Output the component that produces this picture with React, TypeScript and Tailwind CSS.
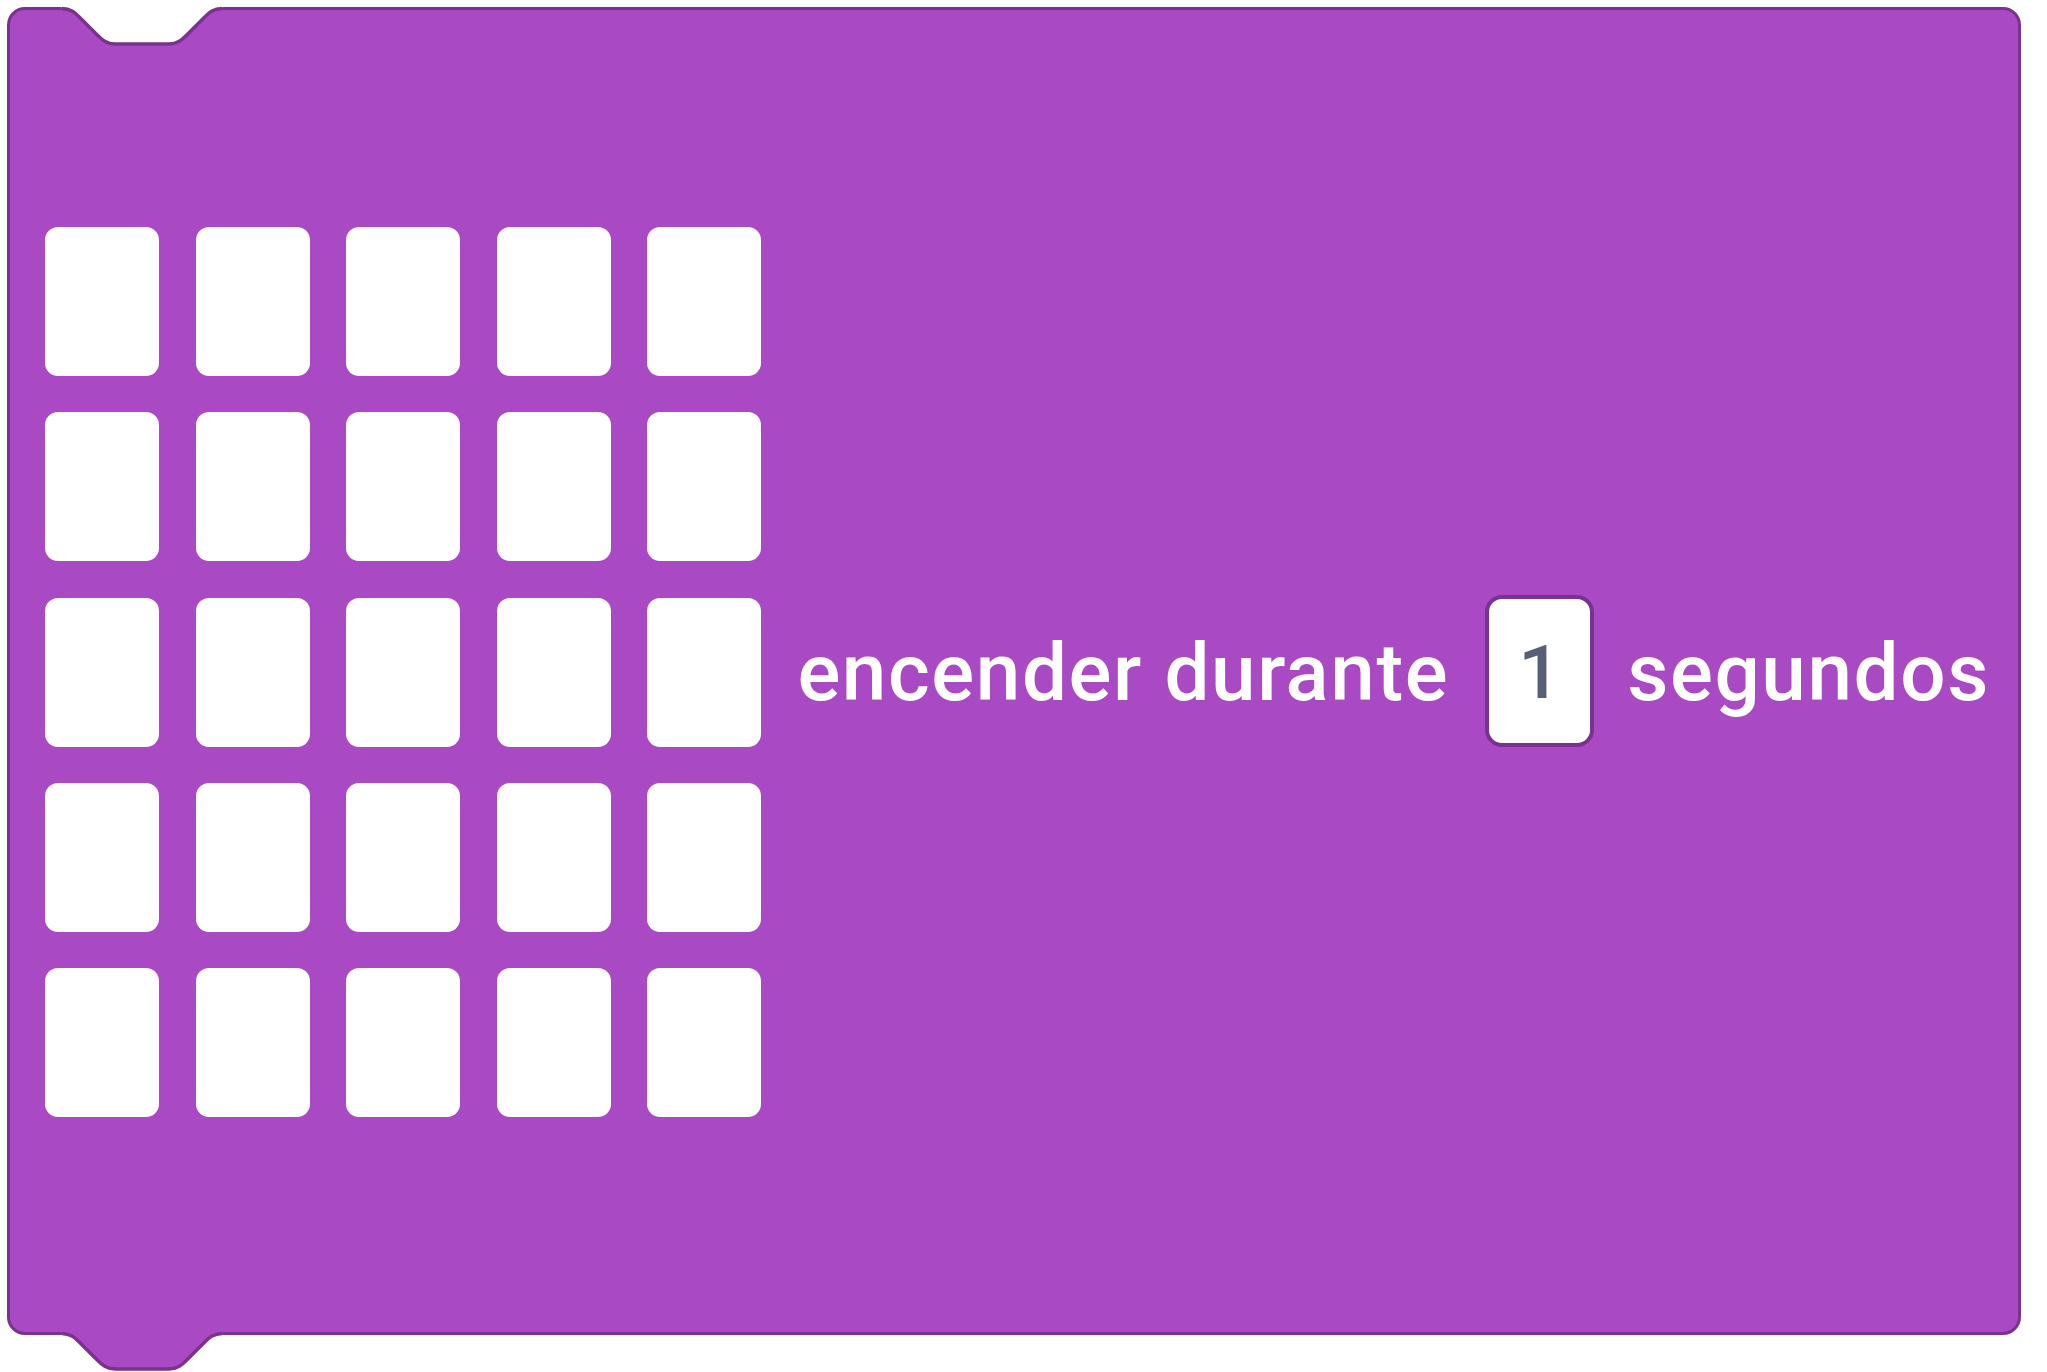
import React from "react";

const FILL = "#a94ac4";
const STROKE = "#7a3290";

const NOTCH =
  "c2,0 3,1 4,2 l4,4 c1,1 2,2 4,2 h12 c2,0 3,-1 4,-2 l4,-4 c1,-1 2,-2 4,-2";

function TopNotch() {
  return (
    <svg
      className="absolute left-[-3px] top-[-3px] overflow-visible"
      width={240}
      height={50}
      aria-hidden
    >
      <g transform="translate(1.5,1.5) scale(4.45)">
        <path d={`M 11.8,-1 L 12,0 ${NOTCH} L 48.2,-1 Z`} fill="#ffffff" />
        <path
          d={`M 12,0 ${NOTCH}`}
          fill="none"
          stroke={STROKE}
          strokeWidth={3.5}
          vectorEffect="non-scaling-stroke"
        />
      </g>
    </svg>
  );
}

function BottomTab() {
  return (
    <svg
      className="absolute left-[-3px] bottom-[-3px] overflow-visible"
      width={240}
      height={2}
      aria-hidden
    >
      <g transform="translate(1.5,0.5) scale(4.45)">
        <path d={`M 11.5,-0.7 L 12,0 ${NOTCH} L 48.5,-0.7 Z`} fill={FILL} />
        <path
          d={`M 12,0 ${NOTCH}`}
          fill="none"
          stroke={STROKE}
          strokeWidth={3.5}
          vectorEffect="non-scaling-stroke"
        />
      </g>
    </svg>
  );
}

export default function App() {
  const cells = Array.from({ length: 25 });
  return (
    <div className="w-[2047px] h-[1372px] bg-white pl-[7px] pt-[7px]">
      <div className="relative w-[2014px] h-[1328px] rounded-[18px] border-[3px] border-[#7a3290] bg-[#a94ac4] flex items-center pl-[35px]">
        <TopNotch />
        <BottomTab />
        <div className="grid grid-cols-[repeat(5,114px)] grid-rows-[repeat(5,149px)] gap-x-[36.6px] gap-y-[36.4px] mt-[2px]">
          {cells.map((_, i) => (
            <div key={i} className="bg-white rounded-[13px]" />
          ))}
        </div>
        <div
          className="flex items-center ml-[36px] text-white text-[80px] font-medium leading-none tracking-[1.6px]"
          style={{ fontFamily: 'Roboto, "Liberation Sans", Arial, sans-serif' }}
        >
          <span className="mt-[4px]">encender durante</span>
          <div className="ml-[36px] w-[109px] h-[152px] rounded-[17px] border-[4px] border-[#7a3290] bg-white flex items-center justify-center text-[#575e75] text-[75px] font-medium leading-none tracking-normal">
            <span className="mt-[2px]">1</span>
          </div>
          <span className="ml-[33px] mt-[4px]">segundos</span>
        </div>
      </div>
    </div>
  );
}
